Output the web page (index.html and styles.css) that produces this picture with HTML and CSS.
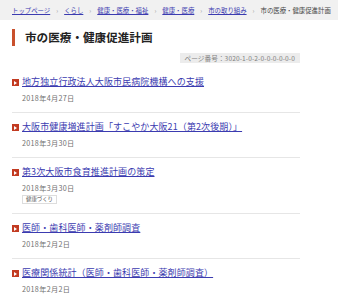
FILE: index.html
```html
<!DOCTYPE html>
<html lang="ja">
<head>
  <meta charset="UTF-8" />
  <title>市の医療・健康促進計画</title>
  <link rel="stylesheet" href="styles.css">
</head>
<body>
  <nav class="breadcrumb">
    <a href="#">トップページ</a><span class="sep">›</span>
    <a href="#">くらし</a><span class="sep">›</span>
    <a href="#">健康・医療・福祉</a><span class="sep">›</span>
    <a href="#">健康・医療</a><span class="sep">›</span>
    <a href="#">市の取り組み</a><span class="sep">›</span>
    <span class="current">市の医療・健康促進計画</span>
  </nav>

  <main class="content">
    <h1 class="page-title">市の医療・健康促進計画</h1>
    <div class="page-no-row">
      <p class="page-no">ページ番号：3020-1-0-2-0-0-0-0-0-0</p>
    </div>

    <ul class="news-list">
      <li class="news-item">
        <a href="#" class="news-link">地方独立行政法人大阪市民病院機構への支援</a>
        <p class="news-date">2018年4月27日</p>
      </li>
      <li class="news-item">
        <a href="#" class="news-link">大阪市健康増進計画「すこやか大阪21（第2次後期）」</a>
        <p class="news-date">2018年3月30日</p>
      </li>
      <li class="news-item">
        <a href="#" class="news-link">第3次大阪市食育推進計画の策定</a>
        <p class="news-date">2018年3月30日</p>
        <span class="tag">健康づくり</span>
      </li>
      <li class="news-item">
        <a href="#" class="news-link">医師・歯科医師・薬剤師調査</a>
        <p class="news-date">2018年2月2日</p>
      </li>
      <li class="news-item">
        <a href="#" class="news-link">医療関係統計（医師・歯科医師・薬剤師調査）</a>
        <p class="news-date">2018年2月2日</p>
      </li>
    </ul>
  </main>
</body>
</html>
```

FILE: styles.css
```css
:root {
  --accent: #c9502c;
  --link: #3b3bb0;
  --line: #e6e6e6;
}

body {
  margin: 0;
  font-family: "Noto Sans CJK JP", "Noto Sans", sans-serif;
  color: #222;
  background: #fff;
}

.breadcrumb {
  height: 20px;
  padding: 0 12px;
  background: #f1f1f1;
  display: flex;
  align-items: center;
  font-size: 6.4px;
  white-space: nowrap;
  overflow: hidden;
}

.breadcrumb a {
  color: var(--link);
}

.breadcrumb .sep {
  color: #999;
  margin: 0 6px;
}

.breadcrumb .current {
  color: #444;
}

.content {
  width: 288px;
  padding: 0 12px;
}

.page-title {
  margin: 9px 0 0;
  height: 17px;
  padding-left: 10px;
  border-left: 3px solid var(--accent);
  font-size: 11.6px;
  line-height: 17px;
  font-weight: bold;
  color: #222;
}

.page-no-row {
  display: flex;
  justify-content: flex-end;
  margin-top: 7px;
}

.page-no {
  margin: 0;
  height: 10px;
  padding: 0 5px;
  background: #ececec;
  font-size: 6.6px;
  line-height: 10px;
  letter-spacing: 0.1px;
  color: #808080;
}

.news-list {
  list-style: none;
  margin: 5px 0 0;
  padding: 0;
}

.news-item {
  padding: 7px 0 9px 10px;
  border-bottom: 1px solid var(--line);
  position: relative;
}

.news-item::before {
  content: "";
  position: absolute;
  left: 0;
  top: 11px;
  width: 7px;
  height: 7px;
  background: #c23b22;
}

.news-item::after {
  content: "";
  position: absolute;
  left: 2px;
  top: 12.5px;
  border-left: 3px solid #fff;
  border-top: 2px solid transparent;
  border-bottom: 2px solid transparent;
}

.news-link {
  display: block;
  font-size: 9px;
  line-height: 14px;
  letter-spacing: 0.1px;
  color: var(--link);
  white-space: nowrap;
}

.news-date {
  margin: 4px 0 0;
  font-size: 7.2px;
  line-height: 10px;
  letter-spacing: 0.3px;
  color: #707070;
}

.tag {
  display: block;
  width: fit-content;
  margin-top: 2px;
  height: 7px;
  padding: 0 3px;
  border: 1px solid #ddd;
  font-size: 5.4px;
  line-height: 7px;
  color: #555;
}
```
